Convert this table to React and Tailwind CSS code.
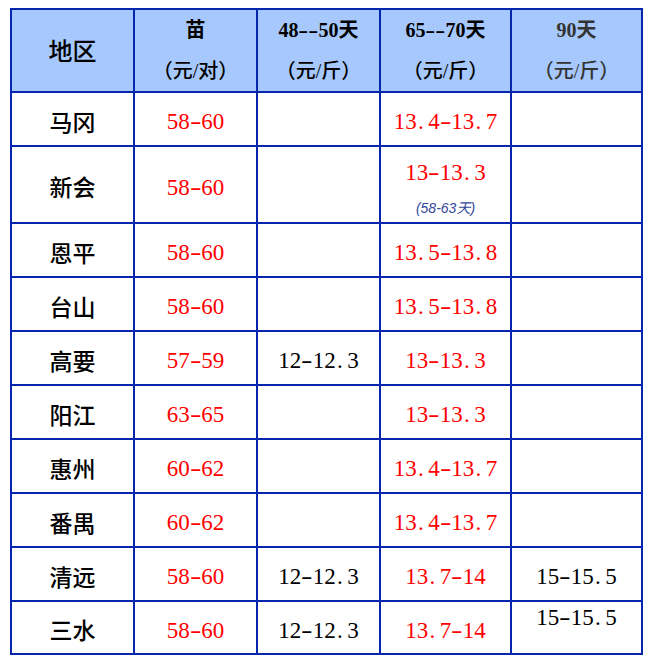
import React from "react";

const SERIF = { fontFamily: '"Liberation Serif", "Noto Sans CJK SC", serif' };

function Mono({ t }) {
  return (
    <span className="whitespace-nowrap">
      {t.split("").map((c, i) =>
        c === "." ? (
          <span key={i} className="inline-block w-[0.5em] text-left pl-[0.05em]">{c}</span>
        ) : c === "-" ? (
          <span key={i} className="inline-block w-[0.5em] text-center">
            <span className="inline-block scale-x-[1.5]">{c}</span>
          </span>
        ) : /[0-9]/.test(c) ? (
          <span key={i} className="inline-block w-[0.5em] text-center">{c}</span>
        ) : (
          <span key={i}>{c}</span>
        )
      )}
    </span>
  );
}

const rows = [
  { name: "马冈", a: "58-60", b: "", c: "13.4-13.7", d: "" },
  { name: "新会", a: "58-60", b: "", c: "13-13.3", note: "(58-63天)", d: "" },
  { name: "恩平", a: "58-60", b: "", c: "13.5-13.8", d: "" },
  { name: "台山", a: "58-60", b: "", c: "13.5-13.8", d: "" },
  { name: "高要", a: "57-59", b: "12-12.3", c: "13-13.3", d: "" },
  { name: "阳江", a: "63-65", b: "", c: "13-13.3", d: "" },
  { name: "惠州", a: "60-62", b: "", c: "13.4-13.7", d: "" },
  { name: "番禺", a: "60-62", b: "", c: "13.4-13.7", d: "" },
  { name: "清远", a: "58-60", b: "12-12.3", c: "13.7-14", d: "15-15.5" },
  { name: "三水", a: "58-60", b: "12-12.3", c: "13.7-14", d: "15-15.5", top: true },
];

function Head({ l1, l2, gray }) {
  return (
    <div className={"bg-[#a6c8fc] flex flex-col items-center justify-center gap-[21px] text-[20px] leading-[20px] " + (gray ? "text-[#333333]" : "text-black")} style={SERIF}>
      <div className="font-bold">
        <Mono t={l1} />
      </div>
      <div className="font-medium">{l2}</div>
    </div>
  );
}

export default function App() {
  return (
    <div className="bg-white w-[648px] h-[665px] pl-[10px] pt-[8px]">
      <div className="grid w-fit bg-[#0626ae] p-[2px] gap-[2px] grid-cols-[121px_121px_121px_129px_129px] grid-rows-[81px_52px_75px_52px_52px_52px_52px_52px_52px_52px_51px]" style={SERIF}>
        <div className="bg-[#a6c8fc] flex items-center justify-center text-[24px] font-medium text-black pt-[3px]">地区</div>
        <Head l1="苗" l2="（元/对）" />
        <Head l1="48--50天" l2="（元/斤）" />
        <Head l1="65--70天" l2="（元/斤）" />
        <Head l1="90天" l2="（元/斤）" gray />
        {rows.map((r) => (
          <React.Fragment key={r.name}>
            <div className="bg-white flex items-center justify-center text-[23px] font-medium text-black pt-[10px]">{r.name}</div>
            <div className="bg-white flex items-center justify-center text-[23px] text-[#ff0000] pt-[7px]">
              <Mono t={r.a} />
            </div>
            <div className="bg-white flex items-center justify-center text-[23px] text-black pt-[7px]">
              {r.b ? <Mono t={r.b} /> : null}
            </div>
            {r.note ? (
              <div className="bg-white flex flex-col items-center pt-[14px] text-[#ff0000]">
                <div className="text-[23px] leading-[23px]">
                  <Mono t={r.c} />
                </div>
                <div className="mt-[16px] text-[14px] leading-[16px] italic text-[#34489a]" style={{ fontFamily: '"Liberation Sans", "Noto Sans CJK SC", sans-serif' }}>
                  {r.note}
                </div>
              </div>
            ) : (
              <div className="bg-white flex items-center justify-center text-[23px] text-[#ff0000] pt-[7px]">
                <Mono t={r.c} />
              </div>
            )}
            {r.top ? (
              <div className="bg-white flex justify-center pt-[4px] text-[23px] leading-[23px] text-black">
                <Mono t={r.d} />
              </div>
            ) : (
              <div className="bg-white flex items-center justify-center text-[23px] text-black pt-[7px]">
                {r.d ? <Mono t={r.d} /> : null}
              </div>
            )}
          </React.Fragment>
        ))}
      </div>
    </div>
  );
}
